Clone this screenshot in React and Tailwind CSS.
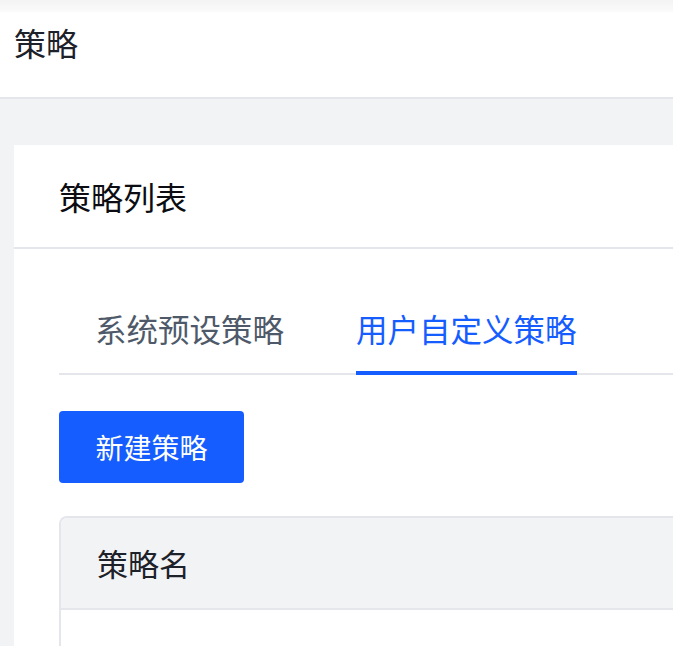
import React, { useState } from "react";

const tabs = ["系统预设策略", "用户自定义策略"];

const App = () => {
  const [active, setActive] = useState(1);

  return (
    <div
      className="min-h-screen bg-[#f2f3f5] overflow-hidden"
      style={{ fontFamily: '"Noto Sans CJK SC", "Noto Sans", sans-serif' }}
    >
      {/* Top shadow strip */}
      <div className="h-[12px] bg-gradient-to-b from-[#f3f3f4] to-[#fbfbfb]" />

      {/* Page header */}
      <header className="h-[87px] bg-white border-b-2 border-[#e5e6eb] pl-[14px] pt-[14px]">
        <h1 className="text-[32px] leading-[32px] text-[#1d2129]">策略</h1>
      </header>

      {/* Content */}
      <main className="pt-[46px] pl-[14px]">
        <section className="bg-white min-h-[520px]">
          <div className="h-[104px] border-b-2 border-[#e5e6eb] pl-[45px] flex items-center">
            <h2 className="text-[32px] leading-[32px] text-[#0b0d12]">策略列表</h2>
          </div>

          <div className="pl-[45px] pt-[63px]">
            {/* Tabs */}
            <div className="flex border-b-2 border-[#e5e6eb]">
              {tabs.map((tab, index) => (
                <button
                  key={tab}
                  onClick={() => setActive(index)}
                  className={
                    index === active
                      ? "relative pb-[29px] text-[31.5px] leading-[32px] text-[#165dff] ml-[72px]"
                      : "relative pb-[29px] text-[31.5px] leading-[32px] text-[#4e5969] ml-[36px]"
                  }
                >
                  {tab}
                  {index === active && (
                    <span className="absolute left-0 right-0 bottom-[-2px] h-[4px] bg-[#165dff]" />
                  )}
                </button>
              ))}
            </div>

            {/* Create button */}
            <button className="mt-[36px] h-[72px] w-[185px] rounded-[4px] bg-[#165dff] text-white text-[28px] leading-[28px]">
              新建策略
            </button>

            {/* Table */}
            <div className="mt-[33px] border-l-2 border-t-2 border-[#e5e6eb] rounded-tl-[8px] overflow-hidden">
              <div className="h-[92px] bg-[#f2f3f5] border-b-2 border-[#e5e6eb] pl-[36px] flex items-center">
                <span className="text-[31px] leading-[32px] text-[#1d2129]">策略名</span>
              </div>
              <div className="h-[120px] bg-white" />
            </div>
          </div>
        </section>
      </main>
    </div>
  );
};

export default App;
